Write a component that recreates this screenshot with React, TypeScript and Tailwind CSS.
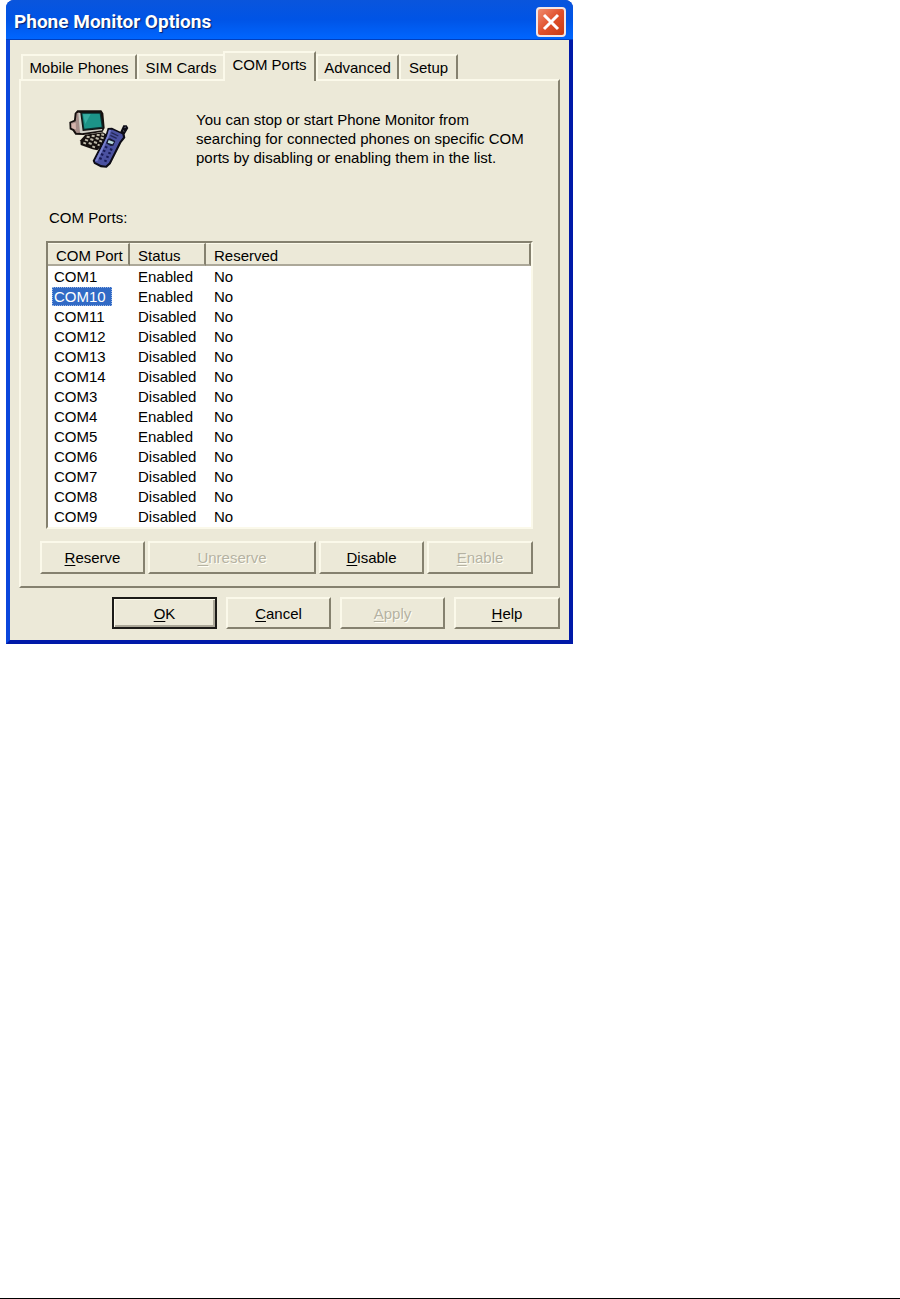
import { useState } from "react";
import type { ReactNode } from "react";

type Port = { name: string; enabled: boolean };

const PORTS: Port[] = [
  { name: "COM1", enabled: true },
  { name: "COM10", enabled: true },
  { name: "COM11", enabled: false },
  { name: "COM12", enabled: false },
  { name: "COM13", enabled: false },
  { name: "COM14", enabled: false },
  { name: "COM3", enabled: false },
  { name: "COM4", enabled: true },
  { name: "COM5", enabled: true },
  { name: "COM6", enabled: false },
  { name: "COM7", enabled: false },
  { name: "COM8", enabled: false },
  { name: "COM9", enabled: false },
];

const TABS = [
  { label: "Mobile Phones", width: "w-[116px]" },
  { label: "SIM Cards", width: "w-[86px]" },
  { label: "COM Ports", width: "w-[93px]" },
  { label: "Advanced", width: "w-[83px]" },
  { label: "Setup", width: "w-[59px]" },
];

const raised =
  "border-2 border-t-[#fbf9ea] border-l-[#fbf9ea] border-r-[#85816f] border-b-[#85816f] bg-[#ece9d8]";

const primaryFrame =
  "border-2 border-[#1c1b18] bg-[#ece9d8] shadow-[inset_1px_1px_0_#fbf9ea,inset_-2px_-2px_0_#aca899]";

function PushButton({
  label,
  disabled,
  primary,
  className = "",
}: {
  label: string;
  disabled?: boolean;
  primary?: boolean;
  className?: string;
}) {
  return (
    <button
      type="button"
      disabled={disabled}
      className={`${primary ? primaryFrame : raised} text-center whitespace-nowrap ${
        disabled ? "text-[#b5b2a2] [text-shadow:1px_1px_0_#fffef5]" : "text-black"
      } ${className}`}
    >
      <span className="underline underline-offset-2">{label[0]}</span>
      {label.slice(1)}
    </button>
  );
}

function PhoneIcon() {
  return (
    <svg viewBox="27 21 180 186" className="h-[62px] w-[60px] shrink-0" aria-hidden="true">
      {/* monitor */}
      <path d="M28 66L42 60L44 40L52 31H124L130 40L134 84L128 95L70 105L46 104L38 92L29 88Z" fill="#15100e" />
      <path d="M33 69L47 64L50 40L58 37L63 98L50 99L42 88L34 84Z" fill="#a58d88" />
      <path d="M35 71L47 68L48 88L43 87L35 83Z" fill="#d6b4ac" />
      <path d="M55 39H61L68 93L126 87L127 91L66 100L60 98Z" fill="#cfcfc6" />
      <path d="M64 38H122L129 83L70 90Z" fill="#0c2f2f" />
      <path d="M67 41H119L125 80L73 86Z" fill="#1c9488" />
      <path d="M69 43L92 42L76 72Z" fill="#38aea2" />
      {/* keyboard */}
      <path d="M61 121L76 104L128 97L142 104L138 124L112 151L98 148L62 135Z" fill="#15100e" />
      <path
        d="M80 110l9 2M95 107l9 2M110 104l9 2M124 103l8 2M75 119l9 3M91 117l9 3M107 114l9 3M122 112l9 3M70 128l8 3M86 129l9 3M102 126l9 3M118 122l8 3M97 139l8 3M113 134l6 2"
        stroke="#bdb9a8"
        strokeWidth="6"
      />
      {/* handset */}
      <path d="M143 84L156 83L181 95L190 76L200 76L205 84L194 103L196 113L184 128L152 192L140 203L122 202L102 191L98 182L130 120L136 108Z" fill="#0d0c16" />
      <path d="M147 89L157 89L187 103L189 112L178 126L147 188L137 197L123 195L105 186V181L134 124L141 109Z" fill="#4a51a0" />
      <path d="M147 89L153 90L146 111L112 184L105 183L134 124L141 109Z" fill="#777fca" />
      <path d="M154 98L175 108M151 106L170 115" stroke="#242957" strokeWidth="4" />
      <path d="M143 117L150 115L166 123L160 137L152 138L138 130Z" fill="#161a33" />
      <path d="M146 120L162 126L157 133L143 128Z" fill="#b7dadd" />
      <path
        d="M135 140l7 3M150 147l7 3M129 151l7 3M145 158l7 3M123 162l7 3M139 169l7 3M118 174l7 3M133 181l7 3"
        stroke="#171a55"
        strokeWidth="6"
      />
      <path d="M193 83L198 81M189 92L193 94" stroke="#666a78" strokeWidth="3" />
    </svg>
  );
}

function HeaderCell({ children, className }: { children?: ReactNode; className: string }) {
  return (
    <th
      scope="col"
      className={`h-[23px] border-t border-r-2 border-b-2 border-t-[#fbf9ea] border-r-[#85816f] border-b-[#aca899] bg-[#ece9d8] px-0 pt-1 pb-0 text-left leading-4 font-normal ${className}`}
    >
      {children}
    </th>
  );
}

export default function App() {
  const [tab, setTab] = useState("COM Ports");
  const [selected, setSelected] = useState("COM10");
  const activeIndex = TABS.findIndex(({ label }) => label === tab);

  return (
    <div className="flex min-h-screen flex-col justify-between border-b border-black bg-white font-['Liberation_Sans',Arial,sans-serif] text-[15px] leading-[19px] text-black">
      <main className="px-1.5">
        <section
          aria-label="Phone Monitor Options"
          className="w-full max-w-[567px] overflow-hidden rounded-t-lg bg-[#0032c4]"
        >
          <header className="flex h-10 items-center justify-between border-b border-[#0040c0] bg-linear-to-b from-[#0a55dc] via-[#0054e6] to-[#0066ff] pt-1 pr-[7px] pl-2">
            <h1 className="font-['Roboto','Liberation_Sans',sans-serif] text-[19px] leading-6 font-bold text-white [text-shadow:1px_1px_1px_#0a1f6b]">
              Phone Monitor Options
            </h1>
            <button
              type="button"
              aria-label="Close"
              className="flex h-[30px] w-[30px] items-center justify-center rounded border-2 border-[#f4e6e4] bg-linear-to-br from-[#ee8a6c] via-[#e0502a] to-[#c83a12]"
            >
              <svg viewBox="0 0 18 18" className="size-[18px]" aria-hidden="true">
                <path d="M2 2L16 16M16 2L2 16" stroke="white" strokeWidth="3" />
              </svg>
            </button>
          </header>

          <div className="border-x-4 border-b-4 border-r-[#0019a8] border-b-[#0019a8] border-l-[#0a46dc] bg-[#ece9d8] px-[9px] pt-[11px] pb-[11px]">
            <div role="tablist" className="flex h-7 items-end pl-0.5">
              {TABS.map(({ label, width }, index) => {
                const active = index === activeIndex;
                return (
                  <button
                    key={label}
                    type="button"
                    role="tab"
                    aria-selected={active}
                    onClick={() => setTab(label)}
                    className={`${width} border-t-2 border-l-2 border-t-[#fbf9ea] border-l-[#fbf9ea] bg-[#ece9d8] text-center whitespace-nowrap ${
                      index === activeIndex - 1 ? "" : "border-r-2 border-r-[#85816f]"
                    } ${active ? "relative -mb-0.5 h-[30px] pb-1.5" : "h-[25px]"}`}
                  >
                    {label}
                  </button>
                );
              })}
            </div>

            <div role="tabpanel" className={`${raised} pt-[26px] pr-[25px] pb-3 pl-[19px]`}>
              <div className="flex gap-[67px] pl-[29px]">
                <PhoneIcon />
                <p className="max-w-[340px] pt-[3px]">
                  You can stop or start Phone Monitor from searching for connected phones on
                  specific COM ports by disabling or enabling them in the list.
                </p>
              </div>

              <h2 id="ports-label" className="mt-[39px] pl-[9px]">
                COM Ports:
              </h2>

              <div className="mt-[14px] ml-1.5 border-2 border-t-[#85816f] border-r-[#fbf9ea] border-b-[#fbf9ea] border-l-[#85816f] bg-white pb-px">
                <table
                  aria-labelledby="ports-label"
                  className="w-full table-fixed border-separate border-spacing-0"
                >
                  <thead>
                    <tr>
                      <HeaderCell className="w-[82px] pl-2">COM Port</HeaderCell>
                      <HeaderCell className="w-[76px] pl-2">Status</HeaderCell>
                      <HeaderCell className="pl-2">Reserved</HeaderCell>
                    </tr>
                  </thead>
                  <tbody>
                    {PORTS.map(({ name, enabled }) => (
                      <tr key={name} aria-selected={name === selected} onClick={() => setSelected(name)}>
                        <td className="h-5 p-0 pl-1">
                          <span
                            className={
                              name === selected
                                ? "block w-[60px] bg-[#316ac5] pl-0.5 text-white outline outline-1 -outline-offset-1 outline-dotted outline-[#9db8e6]"
                                : "block pl-0.5"
                            }
                          >
                            {name}
                          </span>
                        </td>
                        <td className="h-5 p-0 pl-2">{enabled ? "Enabled" : "Disabled"}</td>
                        <td className="h-5 p-0 pl-2">No</td>
                      </tr>
                    ))}
                  </tbody>
                </table>
              </div>

              <div className="mt-3 flex gap-[3px]">
                <PushButton label="Reserve" className="h-[33px] w-[105px]" />
                <PushButton label="Unreserve" disabled className="h-[33px] flex-1" />
                <PushButton label="Disable" className="h-[33px] w-[105px]" />
                <PushButton label="Enable" disabled className="h-[33px] w-[106px]" />
              </div>
            </div>

            <footer className="mt-[9px] flex justify-end gap-[9px]">
              <PushButton label="OK" primary className="h-8 w-[105px]" />
              <PushButton label="Cancel" className="h-8 w-[105px]" />
              <PushButton label="Apply" disabled className="h-8 w-[105px]" />
              <PushButton label="Help" className="h-8 w-[106px]" />
            </footer>
          </div>
        </section>
      </main>
    </div>
  );
}
